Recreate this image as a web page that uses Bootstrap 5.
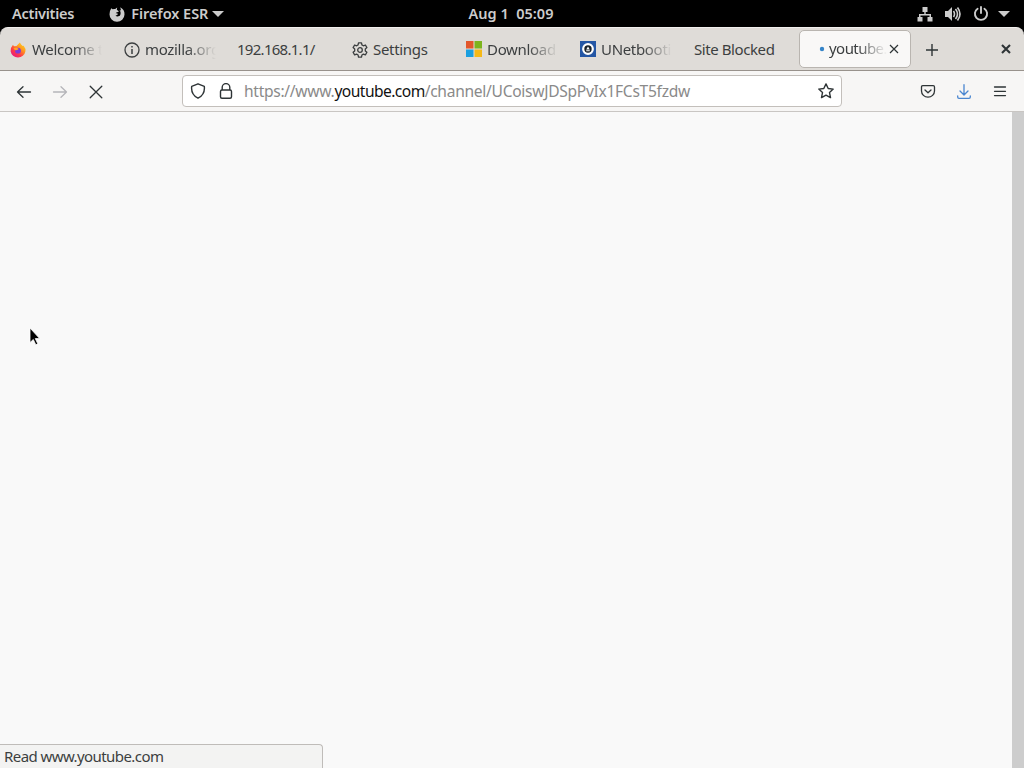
<!DOCTYPE html>
<html lang="en">
<head>
<meta charset="UTF-8">
<meta name="viewport" content="width=device-width, initial-scale=1.0">
<title>Firefox ESR</title>

<!-- Bootstrap CSS -->
<link href="https://cdn.jsdelivr.net/npm/bootstrap@5.3.3/dist/css/bootstrap.min.css" rel="stylesheet">

<style>
body { font-family: "Noto Sans", "Open Sans", sans-serif; font-size: 15px; letter-spacing: -.32px; line-height: 20px; color: #3c3f40; background: #000; }
svg { display: block; flex: none; }
.txt { white-space: nowrap; display: block; }
.topbar { height: 27px; color: #ccc; font-weight: 600; font-size: 14.5px; letter-spacing: -.2px; padding: 0 14px 0 12px; }
.topbar .side { flex: 1 1 0; }
.topbar .txt, .tab-label .txt { padding-bottom: 2px; }
.app-menu { margin-left: 35px; }
.tabstrip { height: 44px; background: #dfdcd8; border-top: 1px solid #f1efed; border-bottom: 1px solid #98928c; border-radius: 8px 8px 0 0; }
.tab { width: 114px; height: 43px; padding: 1px 12px 0 10px; gap: 5px; }
.tab-label { flex: 1 1 0; min-width: 0; overflow: hidden; }
.fade-end { -webkit-mask-image: linear-gradient(to left, transparent, #000 30px); mask-image: linear-gradient(to left, transparent, #000 30px); }
.tab-active { width: 112px; height: 38px; margin: 0 0 0 1px; padding: 0 10px 0 19px; gap: 0; background: #f9f8f7; border: 1px solid #b9b5b0; border-radius: 5px; }
.tools { height: 41px; background: #f7f6f5; border-bottom: 1px solid #c9c6c3; padding: 1px 16px 0; color: #2e3436; }
.urlbar { width: 660px; height: 32px; background: #fff; border: 1px solid #c3bfbb; border-radius: 4px; padding: 0 7px; margin: -1px 0 0 78px; }
.url { color: #8a8a8a; font-size: 15.6px; letter-spacing: -.3px; }
.url b { color: #111; font-weight: 400; letter-spacing: -.56px; }
.page-view { height: 656px; background: #f9f9f9; }
.scroll-track { width: 12px; background: #cdcdcd; }
.status { left: 0; bottom: 0; width: 323px; height: 24px; padding: 1px 4px; background: #f3f3f2; border: 1px solid #bfbcb9; border-width: 1px 1px 0 0; border-radius: 0 4px 0 0; letter-spacing: -.57px; }
.pointer { left: 29px; top: 327px; }
</style>
</head>
<body class="vh-100 overflow-hidden position-relative">

<!-- Desktop bar -->
<header class="topbar d-flex align-items-center">
  <div class="side d-flex align-items-center">
    <span class="txt" style="letter-spacing:-.25px">Activities</span>
    <div class="app-menu d-flex align-items-center">
      <svg width="16" height="16" viewBox="0 0 16 16"><path fill="#ccc" d="M2.3 2.2 3.6 3.3Q5 2.7 6.2 3.1L8.2 1.5 7.8 3.7 9.8 5.3Q9.6 6.3 7.8 6.3L6.7 7.3Q8.5 7 9 8.1 8.2 9.7 6.4 9.5 8 11.3 10.2 10.1C12.2 8.8 11.9 5.6 10.5 3.9L12 4.4 11.3 1.2Q15.8 3.7 15.5 8.5A7.5 7.3 0 0 1 .5 8.3Q.5 4.8 2.3 2.2Z"/></svg>
      <span class="txt" style="margin-left:6px;letter-spacing:-.05px">Firefox ESR</span>
      <svg width="12" height="6" viewBox="0 0 12 6" style="margin-left:4px"><path fill="#ccc" d="M0 0h12L6 6z"/></svg>
    </div>
  </div>
  <span class="txt" style="letter-spacing:0">Aug 1&nbsp; 05:09</span>
  <div class="side d-flex align-items-center justify-content-end">
    <svg width="16" height="16" viewBox="0 0 16 16"><path fill="#ccc" d="M5.500 1h5v5H8.700v2H14v3h1.500v4.500h-5V11h2V9.500h-9V11h2v4.500h-5V11H2V8h5.300V6H5.500z"/></svg>
    <svg width="16" height="16" viewBox="0 0 16 16" style="margin-left:12px"><path fill="#ccc" d="M0 5h3l4-4v14l-4-4H0z"/><path fill="none" stroke="#ccc" stroke-width="1.600" d="M8.500 5q2 3 0 6M10.500 3q4 5 0 10M12.500 1.500q5 6.500 0 13"/></svg>
    <svg width="16" height="16" viewBox="0 0 16 16" style="margin-left:12px"><path fill="none" stroke="#ccc" stroke-width="1.900" stroke-linecap="round" d="M8 1v6M4.600 2.700a6.100 6.100 0 1 0 6.800 0"/></svg>
    <svg width="12" height="6" viewBox="0 0 12 6" style="margin-left:9px"><path fill="#ccc" d="M0 0h12L6 6z"/></svg>
  </div>
</header>

<!-- Tabs -->
<nav class="tabstrip d-flex align-items-center">
  <div class="tab d-flex align-items-center">
    <svg width="16" height="16" viewBox="0 0 16 16">
      <defs><linearGradient id="fox" x1="1" y1="0" x2=".2" y2="1"><stop offset="0" stop-color="#ffe226"/><stop offset=".4" stop-color="#ff9a1e"/><stop offset=".7" stop-color="#ff3b47"/><stop offset="1" stop-color="#e31587"/></linearGradient></defs>
      <path fill="url(#fox)" d="M2.800 3 4.300 4.200 6.500 4 9.800.500Q11 2.700 12.700 4L13.600 3.800Q16 6.500 15.400 9.500A7.500 7.200 0 0 1 .6 9.300Q.5 5.500 2.800 3Z"/>
      <circle cx="8" cy="8.700" r="2.900" fill="#7a3bdc"/><path fill="#ffa424" d="M3.500 6.300Q6.500 4.800 8.800 7 7 8.300 5.500 8.200 4.500 8.200 3.500 6.300Z"/>
    </svg>
    <span class="tab-label fade-end"><span class="txt" style="padding-left:1px">Welcome t</span></span>
  </div>
  <div class="tab d-flex align-items-center">
    <svg width="16" height="16" viewBox="0 0 16 16"><circle cx="8" cy="8" r="7" fill="none" stroke="#3c3f40" stroke-width="1.300"/><path stroke="#3c3f40" stroke-width="1.500" d="M8 7v5M8 4v1.500"/></svg>
    <span class="tab-label fade-end"><span class="txt">mozilla.org</span></span>
  </div>
  <div class="tab d-flex align-items-center" style="padding-left:9px">
    <span class="tab-label"><span class="txt" style="letter-spacing:-.72px">192.168.1.1/</span></span>
  </div>
  <div class="tab d-flex align-items-center">
    <svg width="16" height="16" viewBox="0 0 16 16"><path fill="none" stroke="#3c3f40" stroke-width="1.300" stroke-linejoin="round" d="M6.500.8h3l.4 2.100 1.500.9 2-.8 1.500 2.600-1.600 1.400v1.900l1.600 1.400-1.500 2.600-2-.8-1.500.9-.4 2.200h-3l-.4-2.200-1.500-.9-2 .8-1.500-2.600 1.600-1.400V7L1.100 5.600 2.600 3l2 .8 1.500-.9z"/><circle cx="8" cy="8" r="2.300" fill="none" stroke="#3c3f40" stroke-width="1.300"/></svg>
    <span class="tab-label"><span class="txt">Settings</span></span>
  </div>
  <div class="tab d-flex align-items-center">
    <svg width="16" height="16" viewBox="0 0 16 16" style="margin-top:-2px"><path fill="#e2572b" d="M0 0h7.500v7.500H0z"/><path fill="#7db41d" d="M8.500 0H16v7.500H8.500z"/><path fill="#1b9fdf" d="M0 8.500h7.500V16H0z"/><path fill="#f5b917" d="M8.500 8.500H16V16H8.500z"/></svg>
    <span class="tab-label fade-end"><span class="txt">Download</span></span>
  </div>
  <div class="tab d-flex align-items-center">
    <svg width="16" height="16" viewBox="0 0 16 16" style="margin-top:-2px"><path fill="#2557a5" d="M0 0h16v16H0z"/><circle cx="8" cy="8" r="4.800" fill="#182129" stroke="#fff" stroke-width="2.200"/><path fill="#fff" d="m8 5.600 1.800 2.900H6.200zM6.200 9.200h3.600v1H6.200z"/></svg>
    <span class="tab-label fade-end"><span class="txt">UNetbooti</span></span>
  </div>
  <div class="tab d-flex align-items-center">
    <span class="tab-label"><span class="txt" style="letter-spacing:-.42px">Site Blocked</span></span>
  </div>
  <div class="tab tab-active d-flex align-items-center">
    <svg width="10" height="6" viewBox="0 0 10 6"><circle cx="3" cy="3" r="2.200" fill="#3584c8"/></svg>
    <span class="tab-label fade-end"><span class="txt" style="letter-spacing:-.55px">youtube.</span></span>
    <svg width="10" height="10" viewBox="0 0 10 10" style="margin-left:2px;margin-right:1px"><path stroke="#2e3436" stroke-width="1.200" d="m1 1 8 8M9 1 1 9"/></svg>
  </div>
  <svg width="12" height="12" viewBox="0 0 12 12" style="margin:1px 0 0 15px"><path stroke="#2e3436" stroke-width="1.400" d="M6 0v12M0 6h12"/></svg>
  <svg class="ms-auto" width="10" height="10" viewBox="0 0 10 10" style="margin-right:13px"><path stroke="#2e3436" stroke-width="2.100" d="m1 1 8 8M9 1 1 9"/></svg>
</nav>

<!-- Toolbar -->
<div class="tools d-flex align-items-center">
  <svg width="16" height="16" viewBox="0 0 16 16"><path fill="none" stroke="currentColor" stroke-width="1.300" stroke-linecap="round" stroke-linejoin="round" d="M14.500 8H1.500M7 2.700 1.500 8 7 13.300"/></svg>
  <svg width="16" height="16" viewBox="0 0 16 16" style="margin-left:20px;color:#b5b5b9"><path fill="none" stroke="currentColor" stroke-width="1.300" stroke-linecap="round" stroke-linejoin="round" d="M1.500 8h13M9 2.700 14.500 8 9 13.300"/></svg>
  <svg width="16" height="16" viewBox="0 0 16 16" style="margin-left:20px"><path stroke="currentColor" stroke-width="1.300" stroke-linecap="round" d="m2.200 2.200 11.600 11.600M13.800 2.200 2.200 13.800"/></svg>
  <div class="urlbar d-flex align-items-center">
    <svg width="16" height="16" viewBox="0 0 16 16"><path fill="none" stroke="currentColor" stroke-width="1.400" stroke-linejoin="round" d="M8 .8 14.300 3.300Q15.300 11.500 8 15.200.7 11.500 1.700 3.300Z"/></svg>
    <svg width="16" height="16" viewBox="0 0 16 16" style="margin-left:12px"><path fill="none" stroke="currentColor" stroke-width="1.400" d="M4.200 7V4.200a3.800 3.600 0 0 1 7.600 0V7"/><rect x="2.500" y="7" width="11" height="8.200" rx="1.500" fill="none" stroke="currentColor" stroke-width="1.400"/></svg>
    <span class="txt url" style="margin-left:10px">https://www.<b>youtube.com</b>/channel/UCoiswJDSpPvIx1FCsT5fzdw</span>
    <svg class="ms-auto" width="16" height="16" viewBox="0 0 16 16"><path fill="none" stroke="currentColor" stroke-width="1.400" stroke-linejoin="round" d="m8 .9 2.200 4.600 5 .6-3.700 3.500 1 5L8 12.100l-4.500 2.500 1-5L.8 6.100l5-.6z"/></svg>
  </div>
  <div class="d-flex align-items-center ms-auto" style="gap:20px">
    <svg width="16" height="16" viewBox="0 0 16 16"><path fill="none" stroke="currentColor" stroke-width="1.300" stroke-linecap="round" stroke-linejoin="round" d="M2.800 1.700h10.400q1.300 0 1.300 1.300V7a6.500 6.200 0 0 1-13 0V3q0-1.300 1.300-1.300ZM5 6l3 2.800L11 6"/></svg>
    <svg width="16" height="16" viewBox="0 0 16 16"><path fill="none" stroke="#4a86d0" stroke-width="1.300" stroke-linecap="round" stroke-linejoin="round" d="M8 .7v10M4 7l4 4 4-4M1.700 12v1q0 1.300 1.300 1.300h10q1.300 0 1.300-1.300v-1"/></svg>
    <svg width="16" height="16" viewBox="0 0 16 16"><path stroke="currentColor" stroke-width="1.300" stroke-linecap="round" d="M2.500 3h11M2.500 7.300h11M2.500 11.600h11"/></svg>
  </div>
</div>

<!-- Page area -->
<main class="page-view d-flex justify-content-end">
  <div class="scroll-track"></div>
</main>
<div class="status position-absolute"><span class="txt">Read www.youtube.com</span></div>
<svg class="pointer position-absolute" width="12" height="20" viewBox="0 0 12 20"><path fill="#000" stroke="#fff" stroke-width=".8" d="M1 1v14.500l3.300-3 2.500 5.300 2-1-2.500-5.200h4.400z"/></svg>

<script src="https://cdn.jsdelivr.net/npm/bootstrap@5.3.3/dist/js/bootstrap.bundle.min.js"></script>
</body>
</html>
